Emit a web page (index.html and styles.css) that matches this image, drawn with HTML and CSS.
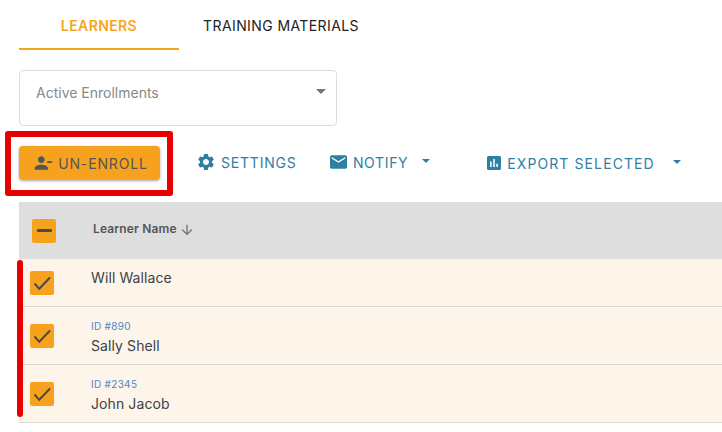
FILE: index.html
```html
<!DOCTYPE html>
<html lang="en">
<head>
  <meta charset="UTF-8">
  <title>Learners</title>
  <link rel="stylesheet" href="styles.css">
</head>
<body>
  <div class="tabs">
    <div class="tab tab-active">LEARNERS</div>
    <div class="tab">TRAINING MATERIALS</div>
  </div>

  <div class="select">
    <span>Active Enrollments</span>
    <span class="caret caret-grey"></span>
  </div>

  <div class="toolbar">
    <button class="btn-unenroll">
      <svg width="20" height="20" viewBox="0 0 24 24"><path fill="#555" d="M14 8c0-2.21-1.79-4-4-4S6 5.790 6 8s1.790 4 4 4 4-1.790 4-4zm3 2v2h6v-2h-6zM2 18v2h16v-2c0-2.660-5.330-4-8-4s-8 1.340-8 4z"/></svg>
      UN-ENROLL
    </button>
    <div class="action action-settings">
      <svg width="20" height="20" viewBox="0 0 24 24"><path fill="#2e7fa3" d="M19.140 12.940c.04-.3.060-.61.060-.94 0-.32-.02-.64-.07-.94l2.030-1.580c.18-.14.230-.41.120-.61l-1.920-3.320c-.12-.22-.37-.29-.59-.22l-2.390.96c-.5-.38-1.030-.7-1.620-.94l-.36-2.540c-.04-.24-.24-.41-.48-.41h-3.840c-.24 0-.43.170-.47.41l-.36 2.540c-.59.24-1.130.570-1.620.94l-2.390-.96c-.22-.08-.47 0-.59.220L2.740 8.870c-.12.210-.08.470.12.610l2.030 1.580c-.05.3-.09.630-.09.940s.02.640.07.940l-2.030 1.580c-.18.140-.23.410-.12.610l1.920 3.320c.12.220.37.290.59.220l2.390-.96c.5.380 1.030.7 1.620.94l.36 2.540c.05.240.24.410.48.410h3.840c.24 0 .44-.17.47-.41l.36-2.540c.59-.24 1.130-.56 1.620-.94l2.390.96c.22.080.47 0 .59-.22l1.920-3.320c.12-.22.070-.47-.12-.61l-2.010-1.580zM12 15.600c-1.980 0-3.600-1.620-3.600-3.600s1.620-3.600 3.600-3.600 3.600 1.620 3.600 3.600-1.620 3.600-3.600 3.600z"/></svg>
      SETTINGS
    </div>
    <div class="action action-notify">
      <svg width="17" height="14" viewBox="2 4 20 16"><path fill="#2e7fa3" d="M20 4H4c-1.100 0-1.990.9-1.990 2L2 18c0 1.100.9 2 2 2h16c1.100 0 2-.9 2-2V6c0-1.100-.9-2-2-2zm0 4l-8 5-8-5V6l8 5 8-5v2z"/></svg>
      NOTIFY
      <span class="caret caret-blue"></span>
    </div>
    <div class="action action-export">
      <svg width="14" height="14" viewBox="3 3 18 18"><path fill="#2e7fa3" d="M19 3H5c-1.100 0-2 .9-2 2v14c0 1.100.9 2 2 2h14c1.100 0 2-.9 2-2V5c0-1.100-.9-2-2-2zM9 17H7v-7h2v7zm4 0h-2V7h2v10zm4 0h-2v-4h2v4z"/></svg>
      EXPORT SELECTED
      <span class="caret caret-blue"></span>
    </div>
  </div>

  <div class="table">
    <div class="table-head">
      <span class="check check-head"><span class="dash"></span></span>
      <span class="head-label">Learner Name</span>
      <svg width="16" height="16" viewBox="0 0 24 24"><path fill="#757575" d="M20 12l-1.410-1.410L13 16.170V4h-2v12.170l-5.580-5.590L4 12l8 8 8-8z"/></svg>
    </div>
    <div class="row row-first">
      <span class="check"><svg width="24" height="24" viewBox="0 0 24 24"><path fill="none" stroke="#4a4a4a" stroke-width="2" d="M4.500 12.500l4.800 5.300L20 6.500"/></svg></span>
      <div class="learner"><div class="learner-name">Will Wallace</div></div>
    </div>
    <div class="row">
      <span class="check"><svg width="24" height="24" viewBox="0 0 24 24"><path fill="none" stroke="#4a4a4a" stroke-width="2" d="M4.500 12.500l4.800 5.300L20 6.500"/></svg></span>
      <div class="learner"><div class="learner-id">ID #890</div><div class="learner-name">Sally Shell</div></div>
    </div>
    <div class="row">
      <span class="check"><svg width="24" height="24" viewBox="0 0 24 24"><path fill="none" stroke="#4a4a4a" stroke-width="2" d="M4.500 12.500l4.800 5.300L20 6.500"/></svg></span>
      <div class="learner"><div class="learner-id">ID #2345</div><div class="learner-name">John Jacob</div></div>
    </div>
  </div>

  <!-- red callouts drawn on top of the screenshot -->
  <div class="callout-box"></div>
  <div class="callout-bar"></div>
</body>
</html>
```

FILE: styles.css
```css
body {
  margin: 0;
  padding-left: 19px;
  height: 432px;
  overflow: hidden;
  position: relative;
  font-family: Inter, "Liberation Sans", sans-serif;
  background-color: #fff;
}
.tabs {
  display: flex;
  height: 50px;
}
.tab {
  width: 204px;
  height: 50px;
  padding-top: 17px;
  box-sizing: border-box;
  text-align: center;
  font-size: 14px;
  line-height: 17px;
  letter-spacing: 0.4px;
  color: #222;
}
.tab-active {
  width: 160px;
  color: #f7a521;
  font-weight: 600;
  border-bottom: 2px solid #f7a521;
}
.select {
  width: 318px;
  height: 56px;
  margin-top: 20px;
  padding: 13px 10px 0 16px;
  box-sizing: border-box;
  display: flex;
  justify-content: space-between;
  border: 1px solid #ddd;
  border-radius: 4px;
  font-size: 14px;
  line-height: 17px;
  color: #888;
}
.caret {
  display: inline-block;
  width: 0;
  height: 0;
  border-left: 5px solid transparent;
  border-right: 5px solid transparent;
}
.caret-grey {
  margin-top: 5px;
  border-top: 5px solid #757575;
}
.caret-blue {
  margin: 0 0 3px 9px;
  border-left-width: 4px;
  border-right-width: 4px;
  border-top: 4px solid #2e7fa3;
}
.toolbar {
  display: flex;
  align-items: center;
  height: 34px;
  margin-top: 20px;
}
.btn-unenroll {
  width: 141px;
  height: 34px;
  padding: 0 0 0 2px;
  box-sizing: border-box;
  display: flex;
  align-items: center;
  justify-content: center;
  gap: 5px;
  border: none;
  border-radius: 4px;
  background-color: #f7a21f;
  box-shadow: 0 1px 3px rgba(0, 0, 0, 0.35);
  font-family: inherit;
  font-size: 14px;
  letter-spacing: 0.85px;
  color: #555;
}
.action {
  display: flex;
  align-items: center;
  gap: 6px;
  margin-top: -2px;
  font-size: 14px;
  letter-spacing: 0.65px;
  color: #2e7fa3;
}
.action-settings {
  margin-left: 36px;
  gap: 5px;
  letter-spacing: 0.8px;
}
.action-notify {
  margin-left: 33.3px;
}
.action-notify .caret {
  margin-left: 8px;
}
.action-export {
  margin-left: 57px;
  margin-top: 0;
  letter-spacing: 1.1px;
}
.action-export .caret {
  margin-left: 12px;
}
.table {
  margin-top: 22px;
  border-left: 1px solid #e4e4e4;
}
.table-head {
  height: 57px;
  display: flex;
  align-items: center;
  background-color: #dedede;
  padding-left: 13px;
  margin-left: -1px;
  font-size: 12px;
}
.head-label {
  margin-left: 37px;
  margin-right: 2px;
  margin-bottom: 5px;
  font-weight: 600;
  letter-spacing: 0.15px;
  color: #555;
}
.table-head svg {
  margin-bottom: 2px;
}
.check {
  width: 24px;
  height: 24px;
  flex: none;
  display: flex;
  align-items: center;
  justify-content: center;
  border-radius: 2px;
  background-color: #f7a21f;
}
.check-head {
  margin-bottom: 0;
}
.dash {
  width: 15px;
  height: 3px;
  border-radius: 1px;
  background-color: #4a4a4a;
}
.row {
  height: 58px;
  box-sizing: border-box;
  padding: 17px 0 0 10px;
  display: flex;
  background-color: #fdf5ea;
  border-bottom: 1px solid #ddd8d0;
}
.row-first {
  height: 48px;
  padding-top: 12px;
}
.learner {
  margin-left: 37px;
  margin-top: -4px;
}
.row-first .learner {
  margin-top: -3px;
}
.learner-id {
  font-size: 10px;
  line-height: 12px;
  margin-bottom: 4px;
  letter-spacing: 0.3px;
  color: #4f86c6;
}
.learner-name {
  font-size: 14px;
  line-height: 20px;
  letter-spacing: 0.1px;
  color: #3c4146;
}
.callout-box {
  position: absolute;
  left: 5px;
  top: 131px;
  width: 168px;
  height: 65px;
  box-sizing: border-box;
  border: 6px solid #e60000;
  border-radius: 3px;
}
.callout-bar {
  position: absolute;
  left: 17px;
  top: 260px;
  width: 6px;
  height: 157px;
  border-radius: 3px;
  background-color: #e60000;
}
```
